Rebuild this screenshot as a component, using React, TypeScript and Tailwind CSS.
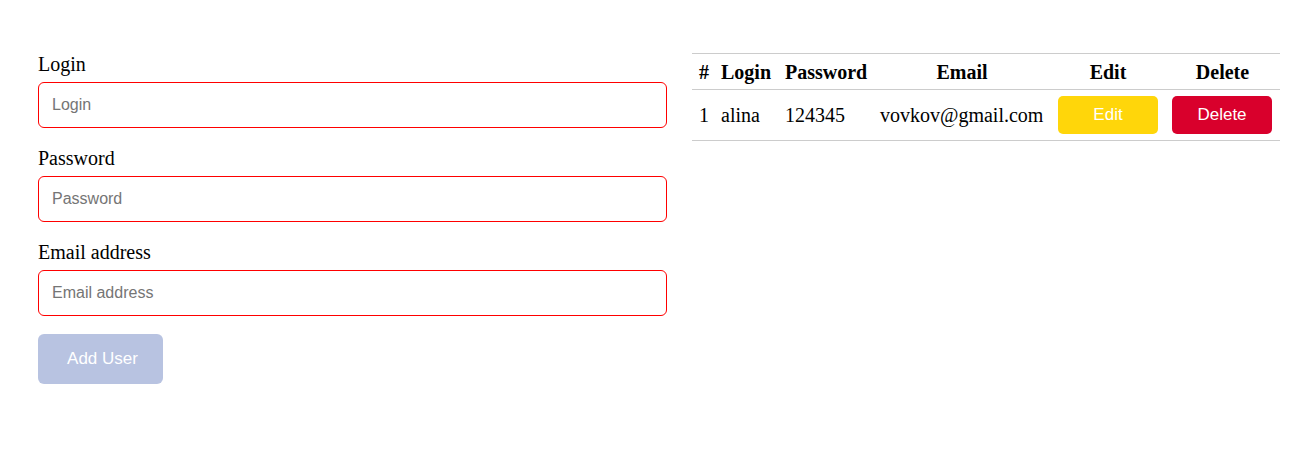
import React, { useState } from 'react';

type User = { login: string; password: string; email: string };

const fields = [
  { key: 'login', label: 'Login', type: 'text' },
  { key: 'password', label: 'Password', type: 'password' },
  { key: 'email', label: 'Email address', type: 'email' },
] as const;

const App: React.FC = () => {
  const [users, setUsers] = useState<User[]>([
    { login: 'alina', password: '124345', email: 'vovkov@gmail.com' },
  ]);
  const [form, setForm] = useState<User>({ login: '', password: '', email: '' });

  const canAdd = form.login && form.password && form.email;

  const addUser = () => {
    if (!canAdd) return;
    setUsers([...users, form]);
    setForm({ login: '', password: '', email: '' });
  };

  return (
    <div className="min-h-screen bg-white pt-[52px] px-[38px] font-['Liberation_Serif',serif] text-black">
      <div className="flex gap-[25px] items-start">
        {/* Form */}
        <div className="w-[629px] shrink-0">
          {fields.map((f) => (
            <div key={f.key} className="mb-[18px]">
              <label className="block text-[20px] leading-6 mb-[6px]">{f.label}</label>
              <input
                type={f.type}
                placeholder={f.label}
                value={form[f.key]}
                onChange={(e) => setForm({ ...form, [f.key]: e.target.value })}
                className="block w-full h-[46px] border border-[#ff0000] rounded-[6px] pl-[13px] font-['Liberation_Sans',sans-serif] text-[16px] placeholder:text-[#757575] outline-none"
              />
            </div>
          ))}
          <button
            onClick={addUser}
            className="w-[125px] h-[50px] rounded-[6px] bg-[#b8c3e1] pl-[4px] text-white font-['Liberation_Sans',sans-serif] text-[17px]"
          >
            Add User
          </button>
        </div>

        {/* Users table */}
        <table className="mt-px w-[588px] shrink-0 table-fixed border-collapse text-[20px]">
          <colgroup>
            <col className="w-[22px]" />
            <col className="w-[64px]" />
            <col className="w-[95px]" />
            <col className="w-[178px]" />
            <col className="w-[114px]" />
            <col className="w-[115px]" />
          </colgroup>
          <thead>
            <tr className="border-y border-[#cccccc] h-[36px]">
              <th className="px-[7px] font-bold text-center">#</th>
              <th className="px-[7px] font-bold text-center">Login</th>
              <th className="px-[7px] font-bold text-center">Password</th>
              <th className="px-[7px] font-bold text-center">Email</th>
              <th className="px-[7px] font-bold text-center">Edit</th>
              <th className="px-[7px] font-bold text-center">Delete</th>
            </tr>
          </thead>
          <tbody>
            {users.map((u, i) => (
              <tr key={i} className="border-b border-[#cccccc]">
                <td className="px-[7px] py-[6px] whitespace-nowrap">{i + 1}</td>
                <td className="px-[7px] py-[6px] whitespace-nowrap">{u.login}</td>
                <td className="px-[7px] py-[6px] whitespace-nowrap">{u.password}</td>
                <td className="px-[7px] py-[6px] whitespace-nowrap">{u.email}</td>
                <td className="px-[7px] py-[6px]">
                  <button className="w-[100px] h-[38px] rounded-[5px] bg-[#ffd60a] text-white font-['Liberation_Sans',sans-serif] text-[17px]">
                    Edit
                  </button>
                </td>
                <td className="px-[7px] py-[6px]">
                  <button
                    onClick={() => setUsers(users.filter((_, j) => j !== i))}
                    className="w-[100px] h-[38px] rounded-[5px] bg-[#d9002c] text-white font-['Liberation_Sans',sans-serif] text-[17px]"
                  >
                    Delete
                  </button>
                </td>
              </tr>
            ))}
          </tbody>
        </table>
      </div>
    </div>
  );
};

export default App;
